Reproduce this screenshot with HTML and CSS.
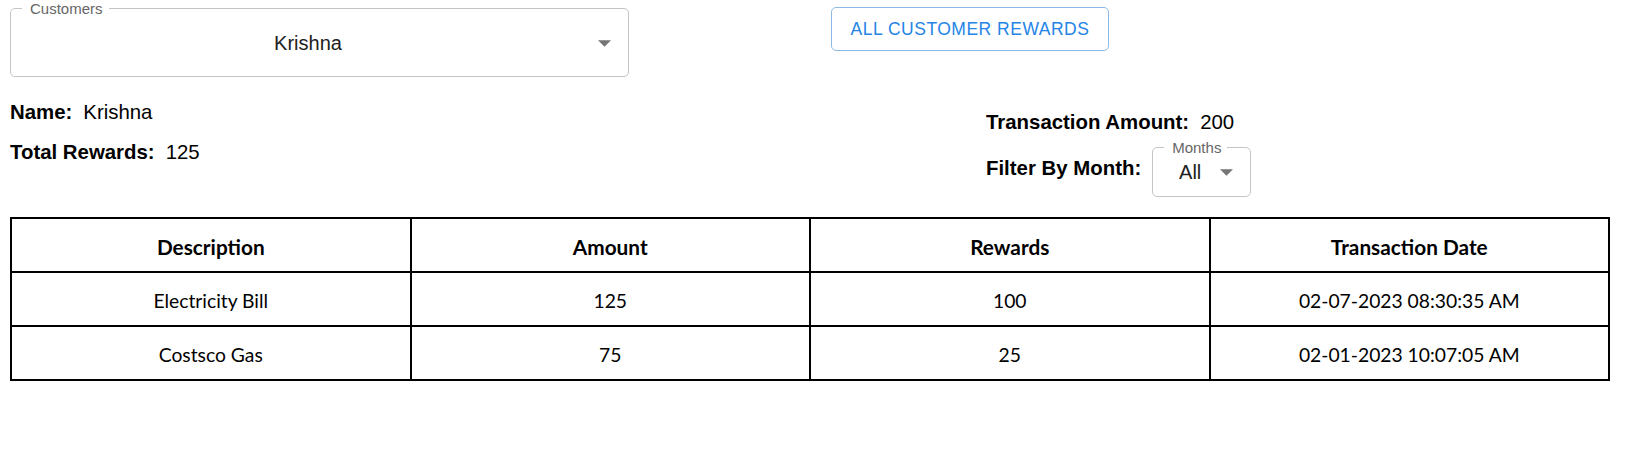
FILE: index.html
```html
<!DOCTYPE html>
<html lang="en">
<head>
<meta charset="utf-8">
<title>Customer Rewards</title>
<link rel="stylesheet" href="styles.css">
</head>
<body>
<div class="page">
  <div class="top">
    <fieldset class="select select-customers">
      <legend>Customers</legend>
      <div class="select-body">
        <span class="select-value">Krishna</span>
        <span class="select-icon"><svg width="13" height="7" viewBox="0 0 10 5"><path d="M0 0l5 5 5-5z"/></svg></span>
      </div>
    </fieldset>
    <button class="btn-outline" type="button">All Customer Rewards</button>
  </div>

  <div class="info">
    <div class="info-col info-left">
      <div class="info-row"><span class="info-label">Name:</span><span class="info-value">Krishna</span></div>
      <div class="info-row"><span class="info-label">Total Rewards:</span><span class="info-value">125</span></div>
    </div>
    <div class="info-col info-right">
      <div class="info-row"><span class="info-label">Transaction Amount:</span><span class="info-value">200</span></div>
      <div class="info-row filter-row">
        <span class="info-label filter-label">Filter By Month:</span>
        <fieldset class="select select-months">
          <legend>Months</legend>
          <div class="select-body">
            <span class="select-value">All</span>
            <span class="select-icon"><svg width="13" height="7" viewBox="0 0 10 5"><path d="M0 0l5 5 5-5z"/></svg></span>
          </div>
        </fieldset>
      </div>
    </div>
  </div>

  <table class="tx-table">
    <thead>
      <tr><th>Description</th><th>Amount</th><th>Rewards</th><th>Transaction Date</th></tr>
    </thead>
    <tbody>
      <tr><td>Electricity Bill</td><td>125</td><td>100</td><td>02-07-2023 08:30:35 AM</td></tr>
      <tr><td>Costsco Gas</td><td>75</td><td>25</td><td>02-01-2023 10:07:05 AM</td></tr>
    </tbody>
  </table>
</div>
</body>
</html>
```

FILE: styles.css
```css
html, body {
  margin: 0;
  padding: 0;
  background: #ffffff;
}

body {
  font-family: "Liberation Sans", Arial, sans-serif;
  color: #000000;
}

.page {
  padding: 0 10px;
}

/* ---------- top row ---------- */
.top {
  display: flex;
  align-items: flex-start;
}

.select {
  margin: 0;
  padding: 0;
  border: 1px solid #c4c4c4;
  border-radius: 5px;
  box-sizing: border-box;
  min-width: 0;
}

.select legend {
  margin-left: 11px;
  padding: 0 6px 0 8px;
  font-size: 15px;
  line-height: 17px;
  color: #666666;
}

.select-body {
  display: flex;
  align-items: center;
  box-sizing: border-box;
  padding-bottom: 7px;
  font-size: 20px;
  line-height: 23px;
  color: #212121;
}

.select-value {
  flex: 1;
  min-width: 0;
  padding-left: 17px;
  text-align: center;
  white-space: nowrap;
}

.select-icon {
  width: 40px;
  flex: none;
  display: flex;
  align-items: center;
  padding-left: 10px;
  box-sizing: border-box;
}

.select-icon svg {
  display: block;
  fill: #757575;
}

.select-customers {
  width: 619px;
}

.select-customers .select-body {
  height: 59px;
}

.select-months {
  width: 99px;
}

.select-months .select-body {
  height: 40px;
}

.btn-outline {
  margin: 7px 0 0 202px;
  width: 278px;
  height: 44px;
  padding: 0;
  background: #ffffff;
  border: 1px solid #8cbae8;
  border-radius: 5px;
  color: #2584e6;
  font-family: "Liberation Sans", Arial, sans-serif;
  font-size: 17.5px;
  letter-spacing: 0.5px;
  text-transform: uppercase;
  cursor: pointer;
}

/* ---------- info ---------- */
.info {
  display: grid;
  grid-template-columns: 976px auto;
  margin-top: 24px;
  font-size: 20.4px;
  line-height: 23px;
}

.info-col {
  display: flex;
  flex-direction: column;
}

.info-left {
  gap: 17px;
}

.info-right {
  padding-top: 10px;
  gap: 5px;
}

.info-row {
  display: flex;
  align-items: center;
}

.info-label {
  font-weight: bold;
  margin-right: 11px;
}

.filter-label {
  margin-right: 11px;
}

/* ---------- table ---------- */
.tx-table {
  margin-top: 20px;
  width: 1600px;
  border-collapse: collapse;
  table-layout: fixed;
  font-family: Lato, "Open Sans", sans-serif;
  font-size: 19.3px;
  line-height: 26px;
  color: #000000;
}

.tx-table th,
.tx-table td {
  border: 2px solid #000000;
  padding: 15px 8px 11px;
  text-align: center;
}

.tx-table th {
  font-weight: bold;
  font-size: 20.8px;
}
```
